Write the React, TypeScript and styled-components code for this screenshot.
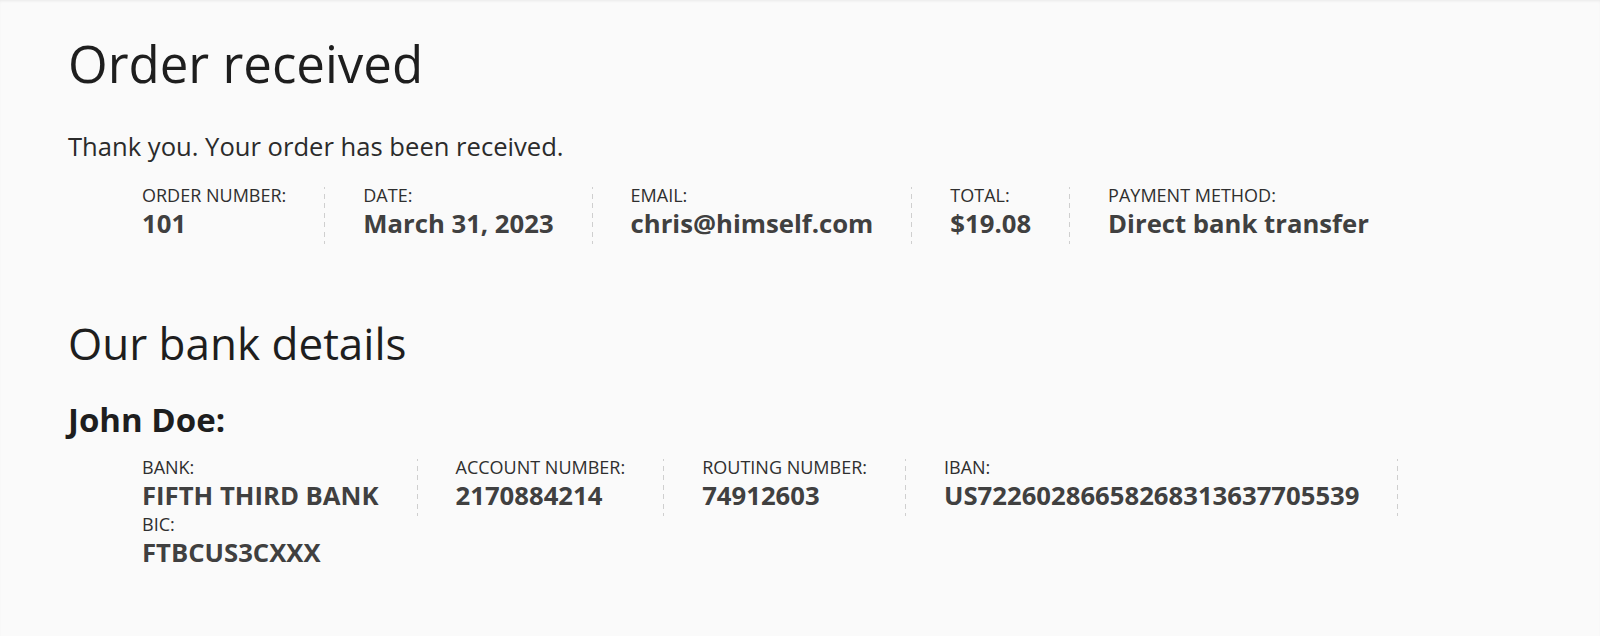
import React from "react";
import styled, { createGlobalStyle } from "styled-components";

const GlobalStyle = createGlobalStyle`
  html, body {
    margin: 0;
    padding: 0;
    background: #fafafa;
  }
  body {
    font-family: "Open Sans", "Noto Sans", "DejaVu Sans", sans-serif;
    color: #2a2a2a;
  }
  * { box-sizing: border-box; }
`;

const Page = styled.main`
  min-height: 636px;
  padding: 33px 68px 40px;
  box-shadow: inset 0 2px 3px -1px rgba(0, 0, 0, 0.07);
`;

const Title = styled.h1`
  margin: 0;
  font-size: 51px;
  font-weight: 400;
  line-height: 61px;
  color: #1e1e1e;
`;

const Lead = styled.p`
  margin: 35px 0 0;
  font-size: 25.6px;
  line-height: 36px;
  color: #2b2b2b;
`;

const Details = styled.ul<{ $top: number }>`
  list-style: none;
  margin: ${(p) => p.$top}px 0 0 74px;
  padding: 0;
  display: flex;
  flex-wrap: wrap;
`;

const Item = styled.li`
  display: flex;
  flex-direction: column;
  padding-right: 39px;
  margin-right: 38px;
  background: repeating-linear-gradient(
      to bottom,
      #cfcfcf 0,
      #cfcfcf 2.5px,
      transparent 2.5px,
      transparent 7px,
      #cfcfcf 7px,
      #cfcfcf 9.5px
    )
    right top / 1px 100% no-repeat;
  &:last-child {
    background: none;
  }
`;

const Label = styled.span`
  font-size: 18px;
  line-height: 16px;
  text-transform: uppercase;
  color: #2f2f2f;
`;

const Value = styled.strong`
  font-size: 25.7px;
  line-height: 41px;
  font-weight: 700;
  color: #404040;
`;

const SectionTitle = styled.h2`
  margin: 72px 0 0;
  font-size: 44px;
  font-weight: 400;
  line-height: 54px;
  color: #1e1e1e;
`;

const AccountName = styled.h3`
  margin: 30px 0 0;
  font-size: 33px;
  font-weight: 700;
  line-height: 40px;
  color: #1e1e1e;
`;

type Entry = { label: string; value: string };

const orderInfo: Entry[] = [
  { label: "Order number:", value: "101" },
  { label: "Date:", value: "March 31, 2023" },
  { label: "Email:", value: "chris@himself.com" },
  { label: "Total:", value: "$19.08" },
  { label: "Payment method:", value: "Direct bank transfer" },
];

const bankInfo: Entry[] = [
  { label: "Bank:", value: "FIFTH THIRD BANK" },
  { label: "Account number:", value: "2170884214" },
  { label: "Routing number:", value: "74912603" },
  { label: "IBAN:", value: "US72260286658268313637705539" },
  { label: "BIC:", value: "FTBCUS3CXXX" },
];

const InfoList = ({ entries, top }: { entries: Entry[]; top: number }) => (
  <Details $top={top}>
    {entries.map((e) => (
      <Item key={e.label}>
        <Label>{e.label}</Label>
        <Value>{e.value}</Value>
      </Item>
    ))}
  </Details>
);

export default function App() {
  return (
    <>
      <GlobalStyle />
      <Page>
        <Title>Order received</Title>
        <Lead>Thank you. Your order has been received.</Lead>
        <InfoList entries={orderInfo} top={22} />
        <SectionTitle>Our bank details</SectionTitle>
        <AccountName>John Doe:</AccountName>
        <InfoList entries={bankInfo} top={19} />
      </Page>
    </>
  );
}
